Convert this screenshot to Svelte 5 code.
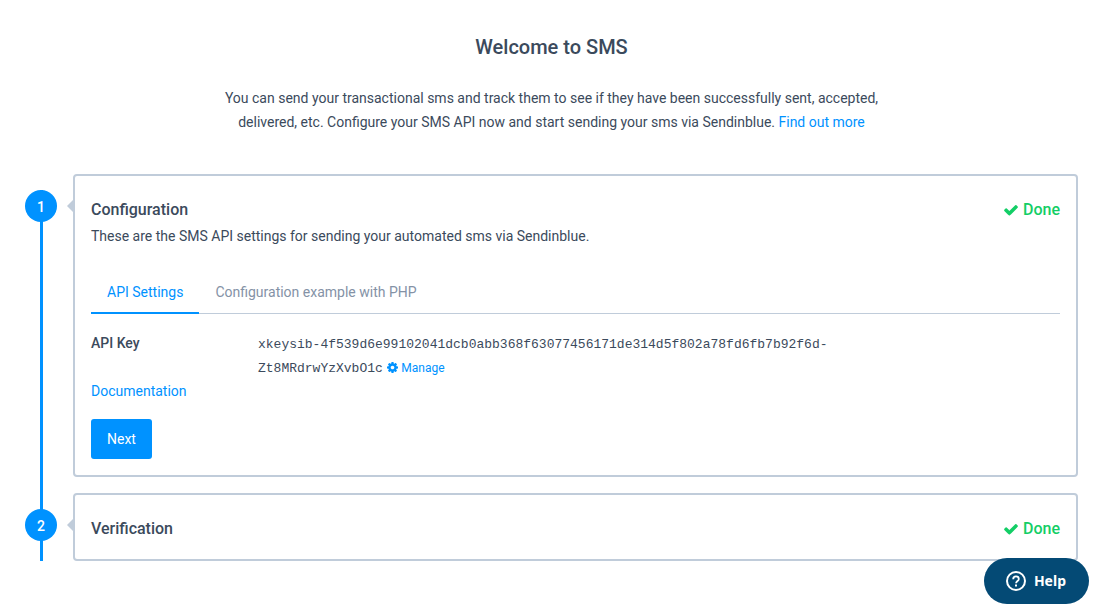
<script lang="ts">
  let activeTab = $state('API Settings');

  const tabs = ['API Settings', 'Configuration example with PHP'];
  const apiKey =
    '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';
</script>

{#snippet done()}
  <span class="done">
    <svg width="16" height="16" viewBox="0 0 1792 1792" fill="currentColor" aria-hidden="true">
      <path d="M1671 566q0 40-28 68l-724 724-136 136q-28 28-68 28t-68-28l-136-136-362-362q-28-28-28-68t28-68l136-136q28-28 68-28t68 28l294 295 656-657q28-28 68-28t68 28l136 136q28 28 28 68z" />
    </svg>
    Done
  </span>
{/snippet}

<main class="page">
  <header class="intro">
    <h1>Welcome to SMS</h1>
    <p>
      You can send your transactional sms and track them to see if they have been successfully sent,
      accepted, delivered, etc. Configure your SMS API now and start sending your sms via
      Sendinblue. <a href="#more">Find out more</a>
    </p>
  </header>

  <ol class="steps">
    <li class="step">
      <span class="step-number">1</span>
      <section class="card">
        <div class="card-head">
          <h2>Configuration</h2>
          {@render done()}
        </div>
        <p>These are the SMS API settings for sending your automated sms via Sendinblue.</p>

        <div class="tabs" role="tablist">
          {#each tabs as tab}
            <button
              class="tab"
              class:active={activeTab === tab}
              role="tab"
              aria-selected={activeTab === tab}
              onclick={() => (activeTab = tab)}>{tab}</button>
          {/each}
        </div>

        <dl class="setting">
          <dt>API Key</dt>
          <dd>
            <code>{apiKey}</code>
            <a class="manage" href="#manage"><svg width="11" height="11" viewBox="0 0 1536 1536" fill="currentColor" aria-hidden="true">
                <path d="M1024 768q0-106-75-181t-181-75-181 75-75 181 75 181 181 75 181-75 75-181zm512-109v222q0 12-8 23t-20 13l-185 28q-19 54-39 91 35 50 107 138 10 12 10 25t-9 23q-27 37-99 108t-94 71q-12 0-26-9l-138-108q-44 23-91 38-16 136-29 186-7 28-36 28H657q-14 0-24.500-8.500T621 1506l-28-184q-49-16-90-37l-141 107q-10 9-25 9-14 0-25-11-126-114-165-168-7-10-7-23 0-12 8-23 15-21 51-66.500t54-70.500q-27-50-41-99L29 913q-13-2-21-12.500T0 877V655q0-12 8-23t19-13l186-28q14-46 39-92-40-57-107-138-10-12-10-24 0-10 9-23 26-36 98.500-107.500T337 135q13 0 26 10l138 107q44-23 91-38 16-136 29-186 7-28 36-28h222q14 0 24.500 8.500T915 30l28 184q49 16 90 37l142-107q9-9 24-9 13 0 25 10 129 119 165 170 7 8 7 22 0 12-8 23-15 21-51 66.500t-54 70.500q26 50 41 98l183 28q13 2 21 12.500t8 23.500z" />
              </svg>Manage</a>
          </dd>
        </dl>
        <a href="#docs">Documentation</a>
        <button class="next">Next</button>
      </section>
    </li>

    <li class="step">
      <span class="step-number">2</span>
      <section class="card">
        <div class="card-head">
          <h2>Verification</h2>
          {@render done()}
        </div>
      </section>
    </li>
  </ol>
</main>

<button class="help">
  <svg width="20" height="20" viewBox="0 0 20 20" fill="none" stroke="currentColor" stroke-width="2" aria-hidden="true">
    <circle cx="10" cy="10" r="9" />
    <path d="M7.200 8.200C7.200 6.500 8.400 5.400 10 5.400s2.800 1 2.800 2.500c0 2-2.700 2.200-2.700 4.300" stroke-width="1.800" />
    <path d="M9 13.400h2v2H9z" fill="currentColor" stroke="none" />
  </svg>
  Help
</button>

<style>
  :global(body) {
    margin: 0;
    background: #fff;
    color: #3b4a5c;
    font-family: Roboto, "Liberation Sans", sans-serif;
    font-size: 14px;
    line-height: 24px;
  }
  h1, h2, p, dl, dd {
    margin: 0;
  }
  a {
    color: #0092ff;
    text-decoration: none;
  }
  button {
    border: 0;
    font: inherit;
    cursor: pointer;
  }

  .page {
    padding: 31px 29px 53px 25px;
  }
  .intro {
    text-align: center;
  }
  .intro h1 {
    font-size: 20px;
    font-weight: 500;
    line-height: 32px;
  }
  .intro p {
    max-width: 670px;
    margin: 23px auto 40px;
  }

  .steps {
    display: flex;
    flex-direction: column;
    gap: 16px;
    margin: 0;
    padding: 0;
    list-style: none;
  }
  .step {
    position: relative;
    display: grid;
    grid-template-columns: 32px 1fr;
    gap: 16px;
    align-items: start;
  }
  /* vertical line joining the step numbers */
  .step::before {
    content: "";
    position: absolute;
    top: 0;
    bottom: 0;
    left: 15px;
    width: 3px;
    background: #0092ff;
  }
  .step:first-child::before {
    top: 16px;
    bottom: -16px;
  }
  .step-number {
    position: relative;
    height: 32px;
    margin-top: 16px;
    border-radius: 50%;
    background: #0092ff;
    color: #fff;
    font-weight: 500;
    line-height: 34px;
    text-align: center;
  }

  .card {
    position: relative;
    padding: 16px;
    border: 2px solid #c0ccda;
    border-radius: 4px;
  }
  .card::before {
    content: "";
    position: absolute;
    top: 24px;
    left: -8px;
    border: solid transparent;
    border-width: 6px 6px 6px 0;
    border-right-color: #c0ccda;
  }
  .card-head {
    display: flex;
    align-items: flex-start;
    justify-content: space-between;
    height: 32px;
    font-size: 16px;
    font-weight: 500;
    line-height: 36px;
  }
  .card-head h2 {
    font: inherit;
  }
  .done {
    display: flex;
    align-items: center;
    gap: 4px;
    color: #13ce66;
  }

  .tabs {
    display: flex;
    margin: 24px 0 17px;
    box-shadow: inset 0 -1px #c0ccda;
  }
  .tab {
    padding: 8px 16px;
    border-bottom: 2px solid transparent;
    background: none;
    color: #8492a6;
  }
  .tab.active {
    border-color: #0092ff;
    color: #0092ff;
  }

  .setting {
    display: grid;
    grid-template-columns: 167px minmax(0, 640px);
  }
  .setting dt {
    font-weight: 500;
  }
  code {
    font-family: "Liberation Mono", monospace;
    font-size: 13px;
    line-height: 16px;
  }
  .manage {
    font-size: 12px;
    line-height: 16px;
  }
  .manage svg {
    margin: 0 3px 0 1px;
    vertical-align: -1px;
  }
  .next {
    display: block;
    margin-top: 16px;
    padding: 8px 16px;
    border-radius: 3px;
    background: #0092ff;
    color: #fff;
  }

  .help {
    position: fixed;
    right: 18px;
    bottom: 10px;
    display: flex;
    align-items: center;
    gap: 8px;
    padding: 11px 23px 11px 22px;
    border-radius: 23px;
    background: #044a75;
    color: #fff;
    font-family: "Noto Sans", sans-serif;
    font-size: 14px;
    font-weight: 700;
  }
</style>
